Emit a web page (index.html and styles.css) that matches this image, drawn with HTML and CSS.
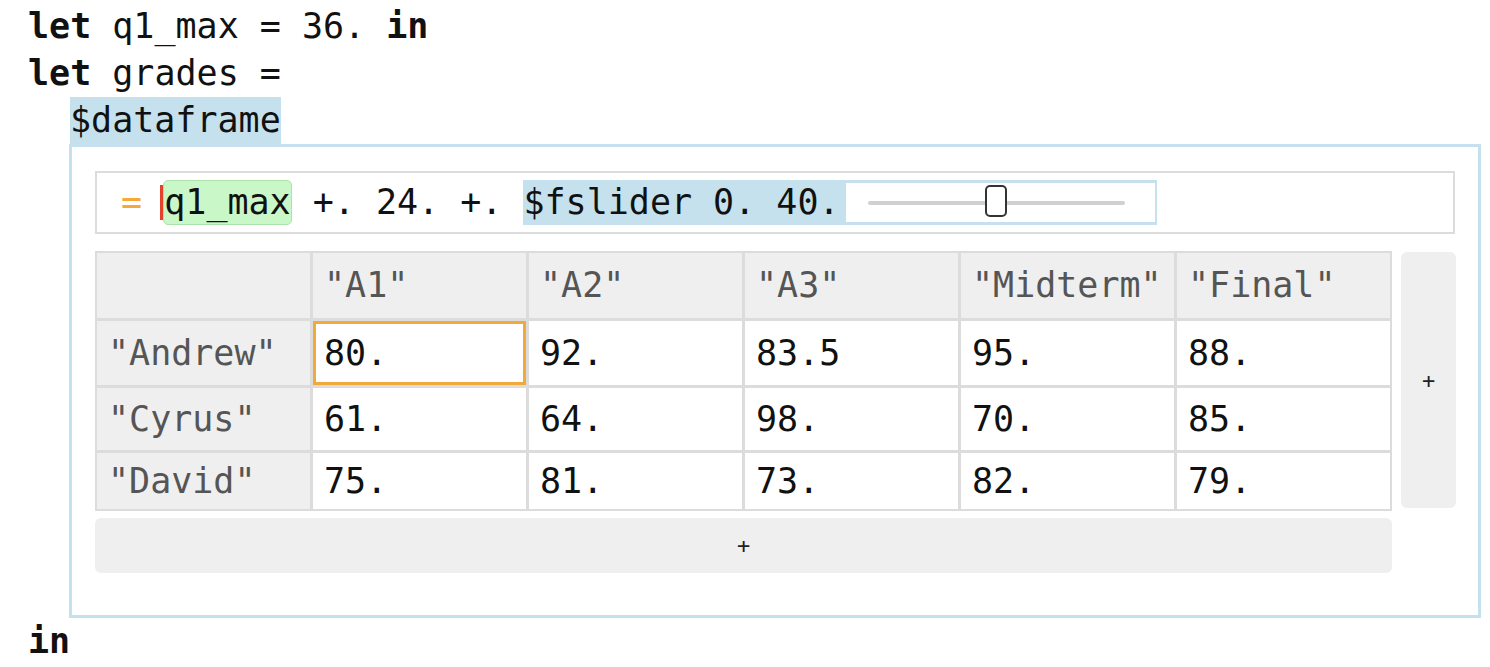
FILE: index.html
```html
<!DOCTYPE html>
<html>
<head>
<meta charset="utf-8">
<link rel="stylesheet" href="styles.css">
</head>
<body>
<div class="line"><span class="kw">let</span> q1_max = 36. <span class="kw">in</span></div>
<div class="line"><span class="kw">let</span> grades =</div>
<div class="line indent"><span class="hl">$dataframe</span></div>
<div class="frame">
  <div class="formula"><span> </span><span class="eq">=</span><span> </span><span class="cursor"></span><span class="ref">q1_max</span><span> +. 24. +. </span><span class="fslider"><span>$fslider 0. 40.</span><span class="slider"><span class="track"><span class="thumb"></span></span></span></span></div>
  <div class="grid-wrap">
    <div class="table">
      <div class="cell head"></div>
      <div class="cell head">"A1"</div>
      <div class="cell head">"A2"</div>
      <div class="cell head">"A3"</div>
      <div class="cell head">"Midterm"</div>
      <div class="cell head">"Final"</div>

      <div class="cell head">"Andrew"</div>
      <div class="cell data selected">80.</div>
      <div class="cell data">92.</div>
      <div class="cell data">83.5</div>
      <div class="cell data">95.</div>
      <div class="cell data">88.</div>

      <div class="cell head">"Cyrus"</div>
      <div class="cell data">61.</div>
      <div class="cell data">64.</div>
      <div class="cell data">98.</div>
      <div class="cell data">70.</div>
      <div class="cell data">85.</div>

      <div class="cell head">"David"</div>
      <div class="cell data">75.</div>
      <div class="cell data">81.</div>
      <div class="cell data">73.</div>
      <div class="cell data">82.</div>
      <div class="cell data">79.</div>
    </div>
    <div class="add add-col">+</div>
    <div class="add add-row">+</div>
  </div>
</div>
<div class="line"><span class="kw">in</span></div>
</body>
</html>
```
FILE: styles.css
```css
html, body {
  margin: 0;
  background: #ffffff;
}
body {
  padding: 3px 0 0 28px;
  font-family: "DejaVu Sans Mono", "Liberation Mono", monospace;
  font-size: 35px;
  line-height: 47px;
  color: #111;
}
.line {
  height: 47px;
  white-space: pre;
}
.kw {
  font-weight: bold;
}
.indent {
  padding-left: 42px;
}
.hl {
  display: inline-block;
  background: #c4e1ed;
  height: 48px;
  line-height: 47px;
}
.frame {
  margin-left: 41px;
  width: 1412px;
  box-sizing: border-box;
  border: 3px solid #c5e1ed;
  padding: 24px 23px 42px 23px;
}
.formula {
  box-sizing: border-box;
  height: 63px;
  border: 2px solid #dcdcdc;
  display: flex;
  align-items: center;
  white-space: pre;
}
.eq {
  color: #f5a93a;
  margin-left: 3px;
  margin-right: -3px;
}
.cursor {
  width: 3px;
  height: 35px;
  background: #e5422c;
}
.ref {
  box-sizing: border-box;
  height: 45px;
  line-height: 43px;
  background: #c9f7c8;
  border: 1px solid #aee2ab;
  border-radius: 5px;
}
.fslider {
  display: flex;
  align-items: center;
  height: 45px;
  background: #c4e1ed;
  padding-right: 2px;
}
.slider {
  margin-left: 6px;
  width: 309px;
  height: 39px;
  background: #ffffff;
  display: flex;
  align-items: center;
  padding-left: 22px;
  box-sizing: border-box;
}
.track {
  position: relative;
  width: 257px;
  height: 4px;
  background: #d0d0d0;
  border-radius: 2px;
}
.thumb {
  position: absolute;
  left: 117px;
  top: -16px;
  width: 18px;
  height: 28px;
  background: #ffffff;
  border: 2px solid #333;
  border-radius: 5px;
}
.grid-wrap {
  margin-top: 17px;
  display: grid;
  grid-template-columns: 1297px 55px;
  column-gap: 9px;
  row-gap: 7px;
}
.table {
  display: grid;
  grid-template-columns: repeat(6, 1fr);
  grid-template-rows: 65px 64px 62px 56px;
  gap: 3px;
  padding: 2px;
  background: #dcdcdc;
}
.cell {
  display: flex;
  align-items: center;
  padding-left: 11px;
  white-space: pre;
}
.head {
  background: #efefef;
  color: #555;
}
.data {
  background: #ffffff;
  color: #111;
}
.selected {
  box-shadow: inset 0 0 0 3px #f2a93b;
}
.add {
  background: #efefef;
  border-radius: 6px;
  display: flex;
  align-items: center;
  justify-content: center;
  font-size: 22px;
  color: #222;
  margin-top: 1px;
}
.add-col {
  height: 256px;
}
.add-row {
  height: 55px;
  margin-top: 0;
}
```
